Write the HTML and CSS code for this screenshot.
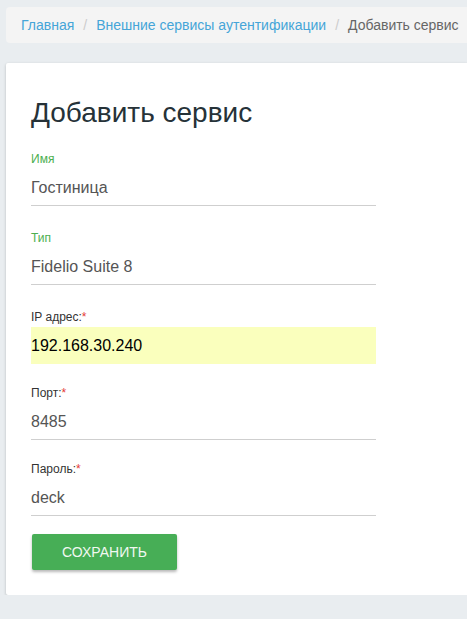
FILE: index.html
```html
<!DOCTYPE html>
<html lang="ru">
<head>
<meta charset="utf-8">
<title>Добавить сервис</title>
<link rel="stylesheet" href="styles.css">
</head>
<body>
<nav class="breadcrumb">
  <a class="crumb-link" href="#">Главная</a>
  <span class="sep">/</span>
  <a class="crumb-link" href="#">Внешние сервисы аутентификации</a>
  <span class="sep">/</span>
  <span class="crumb-active">Добавить сервис</span>
</nav>
<main class="card">
  <h1 class="title">Добавить сервис</h1>
  <form class="form">
    <div class="field field-first">
      <label class="label label-active">Имя</label>
      <div class="input">Гостиница</div>
    </div>
    <div class="field">
      <label class="label label-active">Тип</label>
      <div class="input">Fidelio Suite 8</div>
    </div>
    <div class="field">
      <label class="label">IP адрес:<span class="req">*</span></label>
      <div class="input input-autofill">192.168.30.240</div>
    </div>
    <div class="field field-tight">
      <label class="label">Порт:<span class="req">*</span></label>
      <div class="input">8485</div>
    </div>
    <div class="field field-tight">
      <label class="label">Пароль:<span class="req">*</span></label>
      <div class="input">deck</div>
    </div>
    <button type="button" class="btn">Сохранить</button>
  </form>
</main>
</body>
</html>
```
FILE: styles.css
```css
html, body {
  margin: 0;
  padding: 0;
}
body {
  background: #e9edf0;
  font-family: "Liberation Sans", Arial, sans-serif;
  padding: 7px 0 0 6px;
  overflow: hidden;
}
.breadcrumb {
  background: #f4f4f4;
  border-radius: 4px 0 0 4px;
  height: 36px;
  display: flex;
  align-items: center;
  padding-left: 15px;
  font-size: 14px;
  white-space: nowrap;
}
.crumb-link {
  color: #45a5d8;
  text-decoration: none;
}
.sep {
  color: #cccccc;
  padding: 0 9px;
}
.crumb-active {
  color: #666666;
}
.card {
  margin-top: 20px;
  background: #ffffff;
  border-radius: 2px 0 0 2px;
  box-shadow: 0 1px 3px rgba(0, 0, 0, 0.22);
  padding: 27px 0 25px 25px;
}
.title {
  margin: 0;
  font-size: 28px;
  font-weight: normal;
  color: #263238;
  line-height: 46px;
}
.form {
  width: 345px;
}
.field {
  margin-top: 25px;
}
.field-first {
  margin-top: 16px;
}
.field-tight {
  margin-top: 22px;
}
.label {
  display: block;
  font-size: 12px;
  line-height: 14px;
  color: #333333;
  margin-bottom: 3px;
}
.label-active {
  color: #4caf50;
}
.req {
  color: #e53935;
}
.input {
  height: 37px;
  line-height: 37px;
  font-size: 16px;
  color: #555555;
  border-bottom: 1px solid #cfcfcf;
  box-sizing: border-box;
}
.input-autofill {
  background: #faffbd;
  color: #000000;
  border-bottom-color: #faffbd;
}
.btn {
  margin-top: 18px;
  margin-left: 1px;
  width: 145px;
  height: 36px;
  background: #47ae56;
  color: #f1f8f1;
  border: none;
  border-radius: 2px;
  font-family: "Liberation Sans", Arial, sans-serif;
  font-size: 14px;
  text-transform: uppercase;
  box-shadow: 0 2px 3px rgba(0, 0, 0, 0.28);
  display: block;
}
```
